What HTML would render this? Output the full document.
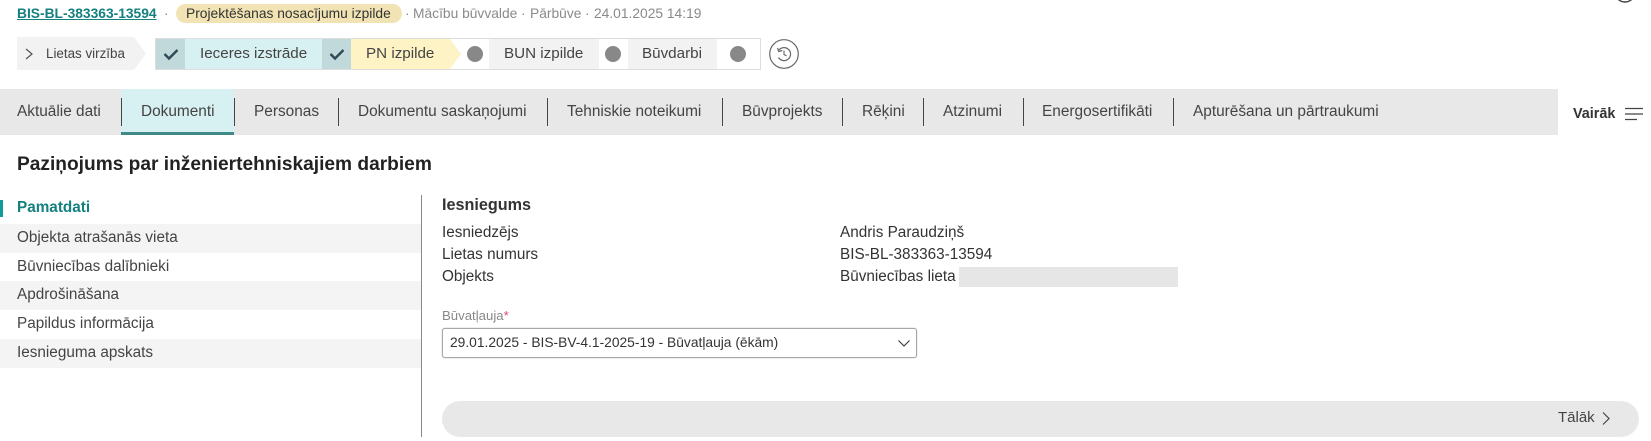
<!DOCTYPE html>
<html lang="lv"><head><meta charset="utf-8"><title>Paziņojums</title>
<style>
html,body{margin:0;padding:0;background:#fff}
body{width:1651px;height:441px;position:relative;overflow:hidden;font-family:"Liberation Sans",sans-serif;color:#333}
.t{position:absolute;white-space:nowrap;line-height:20px;height:20px}
.b{position:absolute}
.g{color:#8a8a8a;font-size:13.8px}
.tab{font-size:15.4px;color:#444;top:102px}
.sep{position:absolute;width:1px;top:98px;height:28px;background:#444}
.row{position:absolute;left:0;width:421px;height:29px}
.m{font-size:15.3px;color:#444;left:17px}
.f{font-size:15.3px;color:#333}
.dot{position:absolute;width:16px;height:16px;border-radius:50%;background:#888;top:46px}
.st{font-size:15.2px;color:#444;top:44px}
</style></head><body>
<svg class="b" style="left:1610px;top:0" width="30" height="4"><circle cx="15" cy="-8" r="10" fill="none" stroke="#444" stroke-width="1.4"/></svg>

<a class="t" style="left:17px;top:4px;font-size:13.8px;font-weight:bold;color:#14807f;text-decoration:underline">BIS-BL-383363-13594</a>
<span class="t g" style="left:164px;top:4px">·</span>
<div class="b" style="left:176px;top:4px;width:226px;height:19px;border-radius:10px;background:#f1e3b3"></div>
<span class="t" style="left:186px;top:4px;font-size:13.8px;color:#333">Projektēšanas nosacījumu izpilde</span>
<span class="t g" style="left:405px;top:4px">·</span>
<span class="t g" style="left:413px;top:4px">Mācību būvvalde</span>
<span class="t g" style="left:521px;top:4px">·</span>
<span class="t g" style="left:530px;top:4px">Pārbūve</span>
<span class="t g" style="left:585px;top:4px">·</span>
<span class="t g" style="left:594px;top:4px">24.01.2025 14:19</span>

<svg class="b" style="left:17px;top:37px" width="130" height="33"><polygon points="0,0 117,0 129,16.5 117,33 0,33" fill="#f2f2f2"/><path d="M9 12l6 5-6 5" fill="none" stroke="#555" stroke-width="1.2"/></svg>
<span class="t" style="left:46px;top:44px;font-size:13.4px;color:#444">Lietas virzība</span>

<div class="b" style="left:155px;top:38px;width:604px;height:30px;border:1px solid #ddd;background:#fff"></div>
<div class="b" style="left:156px;top:39px;width:29px;height:30px;background:#c1d9db"></div>
<div class="b" style="left:185px;top:39px;width:137px;height:30px;background:#d7f0f1"></div>
<div class="b" style="left:322px;top:39px;width:29px;height:30px;background:#c1d9db"></div>
<svg class="b" style="left:351px;top:39px" width="110" height="30"><polygon points="0,0 99,0 110,15 99,30 0,30" fill="#fdf3c5"/></svg>
<svg class="b" style="left:163px;top:46px" width="16" height="16"><path d="M1.5 8l4.5 4.5 8.5-8.5" fill="none" stroke="#2d4a55" stroke-width="2.4"/></svg>
<svg class="b" style="left:329px;top:46px" width="16" height="16"><path d="M1.5 8l4.5 4.5 8.5-8.5" fill="none" stroke="#2d4a55" stroke-width="2.4"/></svg>
<span class="t st" style="left:200px">Ieceres izstrāde</span>
<span class="t st" style="left:366px">PN izpilde</span>
<div class="dot" style="left:467px"></div>
<div class="b" style="left:489px;top:39px;width:110px;height:30px;background:#f2f2f2"></div>
<span class="t st" style="left:504px">BUN izpilde</span>
<div class="dot" style="left:605px"></div>
<div class="b" style="left:628px;top:39px;width:89px;height:30px;background:#f2f2f2"></div>
<span class="t st" style="left:642px">Būvdarbi</span>
<div class="dot" style="left:730px"></div>

<svg class="b" style="left:769px;top:39px" width="30" height="30"><circle cx="15" cy="15" r="14.3" fill="#fff" stroke="#666" stroke-width="1.2"/><path d="M10 11A6.5 6.5 0 1 1 9.5 18.5" fill="none" stroke="#666" stroke-width="1.2"/><path d="M8.5 9l1.3 3.5 3.5-1" fill="none" stroke="#666" stroke-width="1.2"/><path d="M15 11.5v4l2.6 1.4" fill="none" stroke="#666" stroke-width="1.1"/></svg>

<div class="b" style="left:0;top:89px;width:1558px;height:46px;background:#e8e8e8"></div>
<div class="b" style="left:121px;top:89px;width:113px;height:46px;background:#d7f0f1"></div>
<div class="b" style="left:121px;top:132px;width:113px;height:3px;background:#3f8a87"></div>
<div class="sep" style="left:121px"></div><div class="sep" style="left:234px"></div><div class="sep" style="left:338px"></div><div class="sep" style="left:547px"></div><div class="sep" style="left:722px"></div><div class="sep" style="left:842px"></div><div class="sep" style="left:923px"></div><div class="sep" style="left:1023px"></div><div class="sep" style="left:1173px"></div>
<span class="t tab" style="left:17px">Aktuālie dati</span>
<span class="t tab" style="left:141px">Dokumenti</span>
<span class="t tab" style="left:254px">Personas</span>
<span class="t tab" style="left:358px">Dokumentu saskaņojumi</span>
<span class="t tab" style="left:567px">Tehniskie noteikumi</span>
<span class="t tab" style="left:742px">Būvprojekts</span>
<span class="t tab" style="left:862px">Rēķini</span>
<span class="t tab" style="left:943px">Atzinumi</span>
<span class="t tab" style="left:1042px">Energosertifikāti</span>
<span class="t tab" style="left:1193px">Apturēšana un pārtraukumi</span>
<span class="t" style="left:1573px;top:104px;font-size:14.4px;font-weight:bold;color:#333">Vairāk</span>
<svg class="b" style="left:1625px;top:107px" width="18" height="14"><path d="M0 1.5h18M0 7h18M0 12.5h12" stroke="#444" stroke-width="1.3" fill="none"/></svg>

<span class="t" style="left:17px;top:155px;font-size:19.15px;font-weight:bold;color:#222">Paziņojums par inženiertehniskajiem darbiem</span>

<div class="b" style="left:0;top:200px;width:3px;height:17px;background:#0f9c98"></div>
<span class="t" style="left:17px;top:198px;font-size:15.3px;font-weight:bold;color:#14807f">Pamatdati</span>
<div class="row" style="top:224px;background:#f4f4f4"></div>
<div class="row" style="top:281px;background:#f4f4f4"></div>
<div class="row" style="top:339px;background:#f4f4f4"></div>
<span class="t m" style="top:228px">Objekta atrašanās vieta</span>
<span class="t m" style="top:257px">Būvniecības dalībnieki</span>
<span class="t m" style="top:285px">Apdrošināšana</span>
<span class="t m" style="top:314px">Papildus informācija</span>
<span class="t m" style="top:343px">Iesnieguma apskats</span>
<div class="b" style="left:421px;top:195px;width:1px;height:242px;background:#888"></div>

<span class="t" style="left:442px;top:195px;font-size:16.2px;font-weight:bold;color:#333">Iesniegums</span>
<span class="t f" style="left:442px;top:223px">Iesniedzējs</span>
<span class="t f" style="left:442px;top:245px">Lietas numurs</span>
<span class="t f" style="left:442px;top:267px">Objekts</span>
<span class="t f" style="left:840px;top:223px">Andris Paraudziņš</span>
<span class="t f" style="left:840px;top:245px">BIS-BL-383363-13594</span>
<span class="t f" style="left:840px;top:267px">Būvniecības lieta</span>
<div class="b" style="left:959px;top:267px;width:219px;height:20px;background:#e6e6e6"></div>

<span class="t" style="left:442px;top:306px;font-size:13.2px;color:#888">Būvatļauja<span style="color:#e0457b">*</span></span>
<div class="b" style="left:442px;top:328px;width:473px;height:28px;border:1px solid #a8a8a8;border-radius:3px;background:#fff;box-shadow:0 0 1px #999"></div>
<span class="t" style="left:450px;top:333px;font-size:13.8px;color:#333">29.01.2025 - BIS-BV-4.1-2025-19 - Būvatļauja (ēkām)</span>
<svg class="b" style="left:897px;top:339px" width="14" height="9"><path d="M1.5 1.5l5.5 5.5 5.5-5.5" fill="none" stroke="#444" stroke-width="1.2"/></svg>

<div class="b" style="left:442px;top:401px;width:1197px;height:36px;border-radius:18px;background:#e8e8e8"></div>
<span class="t" style="left:1558px;top:408px;font-size:15px;color:#444">Tālāk</span>
<svg class="b" style="left:1601px;top:411px" width="10" height="15"><path d="M2 1.5l6 6-6 6" fill="none" stroke="#444" stroke-width="1.2"/></svg>
</body></html>
